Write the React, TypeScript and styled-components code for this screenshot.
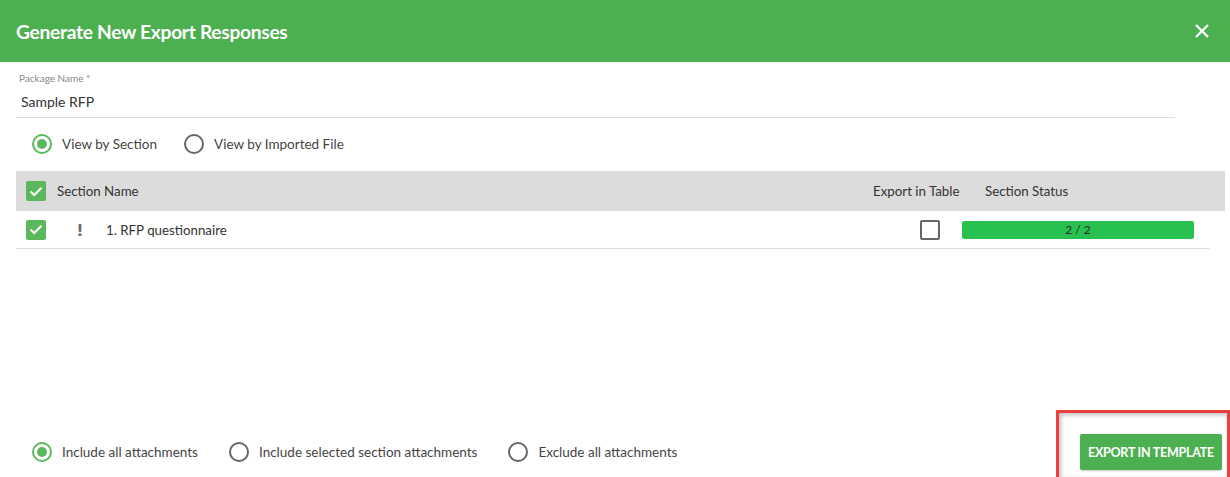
import React from "react";
import styled, { createGlobalStyle } from "styled-components";

const Global = createGlobalStyle`
  html, body { margin: 0; padding: 0; background: #fff; }
  body { font-family: "Lato", "Open Sans", sans-serif; color: #333; }
  * { box-sizing: border-box; }
`;

const Modal = styled.div`
  position: relative;
  width: 1230px;
  height: 477px;
  display: flex;
  flex-direction: column;
  background: #fff;
  overflow: hidden;
`;

const Header = styled.div`
  height: 62px;
  background: #4caf50;
  display: flex;
  align-items: center;
  justify-content: space-between;
  padding: 0 18px 0 16px;
`;

const Title = styled.h1`
  margin: 0;
  font-size: 19.2px;
  font-weight: 700;
  color: #fff;
  letter-spacing: -0.3px;
`;

const CloseBtn = styled.button`
  border: 0;
  background: transparent;
  padding: 0;
  width: 20px;
  height: 20px;
  display: flex;
  align-items: center;
  justify-content: center;
  cursor: pointer;
`;

const Body = styled.div`
  flex: 1;
  display: flex;
  flex-direction: column;
  padding: 9px 5px 0 16px;
`;

const Field = styled.div`
  width: 1159px;
  border-bottom: 1px solid #dedede;
  padding: 0 0 6px 3px;
  display: flex;
  flex-direction: column;
`;

const FieldLabel = styled.label`
  font-size: 10px;
  color: #888;
  line-height: 14px;
`;

const FieldValue = styled.div`
  font-size: 14px;
  color: #333;
  line-height: 18px;
  margin-top: 8px;
  padding-left: 2px;
`;

const RadioGroup = styled.div<{ $gap: number }>`
  display: flex;
  align-items: center;
  gap: ${(p) => p.$gap}px;
  padding-left: 16px;
`;

const RadioItem = styled.label`
  display: flex;
  align-items: center;
  gap: 10px;
  font-size: 13.5px;
  color: #444;
`;

const RadioCircle = styled.span<{ $on?: boolean }>`
  width: 20px;
  height: 20px;
  border-radius: 50%;
  border: 2px solid ${(p) => (p.$on ? "#5cb85c" : "#666")};
  display: flex;
  align-items: center;
  justify-content: center;
  &::after {
    content: "";
    width: 10px;
    height: 10px;
    border-radius: 50%;
    background: ${(p) => (p.$on ? "#5cb85c" : "transparent")};
  }
`;

const ViewRow = styled.div`
  margin-top: 16px;
  height: 20px;
  display: flex;
  align-items: center;
`;

const Table = styled.div`
  margin-top: 17px;
  display: flex;
  flex-direction: column;
`;

const HeadRow = styled.div`
  height: 40px;
  background: #dcdcdc;
  display: grid;
  grid-template-columns: 31px 1fr 112px 240px;
  align-items: center;
  padding-left: 10px;
  font-size: 13.3px;
  color: #333;
`;

const BodyRow = styled.div`
  width: 1194px;
  height: 38px;
  border-bottom: 1px solid #dedede;
  display: grid;
  grid-template-columns: 51px 29px 1fr 42px 232px;
  align-items: center;
  padding: 0 16px 0 10px;
  font-size: 13.3px;
  color: #333;
`;

const Check = styled.span<{ $on?: boolean }>`
  width: 20px;
  height: 20px;
  border-radius: 2px;
  display: flex;
  align-items: center;
  justify-content: center;
  background: ${(p) => (p.$on ? "#5cb85c" : "#fff")};
  border: ${(p) => (p.$on ? "none" : "2px solid #666")};
`;

const Bang = styled.span`
  font-weight: 900;
  color: #6a6a6a;
  font-size: 17px;
  line-height: 1;
  transform: scaleX(1.2);
  transform-origin: left center;
`;

const Progress = styled.div`
  height: 18px;
  border-radius: 2px;
  background: #28c04f;
  color: #2a2a2a;
  font-size: 12px;
  display: flex;
  align-items: center;
  justify-content: center;
`;

const Cell = styled.div`
  white-space: nowrap;
`;

const Spacer = styled.div`
  flex: 1;
`;

const Footer = styled.div`
  height: 50px;
  display: flex;
  align-items: center;
  justify-content: space-between;
  padding-right: 3px;
`;

const ExportBtn = styled.button`
  width: 142px;
  height: 36px;
  border: 0;
  border-radius: 2px;
  background: #4caf50;
  color: #fff;
  font-family: "Lato", sans-serif;
  font-weight: 700;
  font-size: 12.5px;
  letter-spacing: -0.25px;
  white-space: nowrap;
  padding: 0;
  box-shadow: 0 1px 2px rgba(0, 0, 0, 0.2);
  cursor: pointer;
`;

const Highlight = styled.div`
  position: absolute;
  left: 1056px;
  top: 410px;
  width: 174px;
  height: 70px;
  border: 3px solid #ee3f3f;
  box-shadow: inset 2px 2px 4px rgba(0, 0, 0, 0.25);
  pointer-events: none;
`;

const Tick = () => (
  <svg width="14" height="11" viewBox="0 0 14 11">
    <path d="M1.5 5.5 L5.2 9 L12.5 1.8" fill="none" stroke="#fff" strokeWidth="2" />
  </svg>
);

export default function App() {
  return (
    <>
      <Global />
      <Modal>
        <Header>
          <Title>Generate New Export Responses</Title>
          <CloseBtn aria-label="close">
            <svg width="16" height="16" viewBox="0 0 16 16">
              <path d="M2 2 L14 14 M14 2 L2 14" stroke="#fff" strokeWidth="2.4" />
            </svg>
          </CloseBtn>
        </Header>
        <Body>
          <Field>
            <FieldLabel>Package Name *</FieldLabel>
            <FieldValue>Sample RFP</FieldValue>
          </Field>
          <ViewRow>
            <RadioGroup $gap={27}>
              <RadioItem>
                <RadioCircle $on />
                View by Section
              </RadioItem>
              <RadioItem>
                <RadioCircle />
                View by Imported File
              </RadioItem>
            </RadioGroup>
          </ViewRow>
          <Table>
            <HeadRow>
              <Check $on>
                <Tick />
              </Check>
              <Cell>Section Name</Cell>
              <Cell>Export in Table</Cell>
              <Cell>Section Status</Cell>
            </HeadRow>
            <BodyRow>
              <Check $on>
                <Tick />
              </Check>
              <Bang>!</Bang>
              <Cell>1. RFP questionnaire</Cell>
              <Check />
              <Progress>2 / 2</Progress>
            </BodyRow>
          </Table>
          <Spacer />
          <Footer>
            <RadioGroup $gap={31}>
              <RadioItem>
                <RadioCircle $on />
                Include all attachments
              </RadioItem>
              <RadioItem>
                <RadioCircle />
                Include selected section attachments
              </RadioItem>
              <RadioItem>
                <RadioCircle />
                Exclude all attachments
              </RadioItem>
            </RadioGroup>
            <ExportBtn>EXPORT IN TEMPLATE</ExportBtn>
          </Footer>
        </Body>
        <Highlight />
      </Modal>
    </>
  );
}
